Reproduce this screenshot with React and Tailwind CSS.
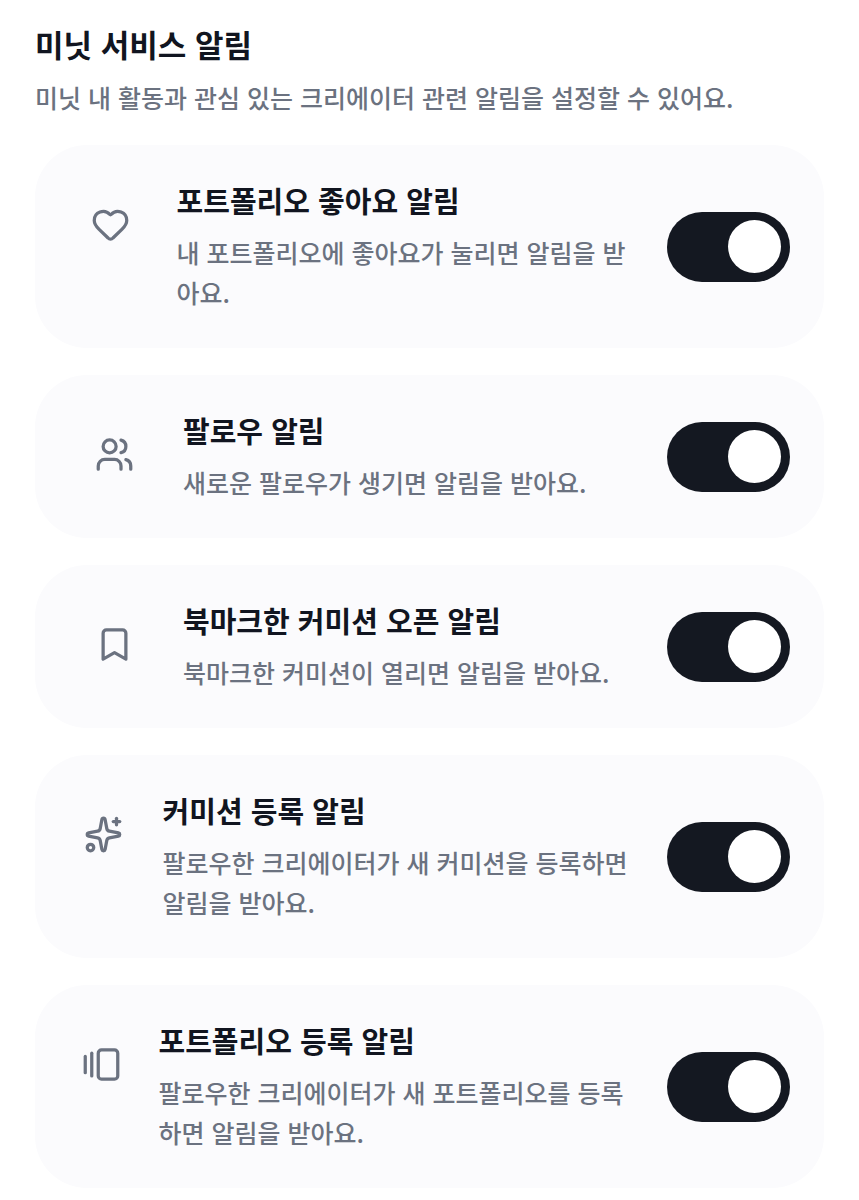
import { Heart, Users, Bookmark, Sparkles, GalleryHorizontalEnd } from "lucide-react";

const settings = [
  { id: "portfolio-like", icon: Heart, title: "포트폴리오 좋아요 알림", description: "내 포트폴리오에 좋아요가 눌리면 알림을 받아요." },
  { id: "follow", icon: Users, title: "팔로우 알림", description: "새로운 팔로우가 생기면 알림을 받아요." },
  { id: "commission-open", icon: Bookmark, title: "북마크한 커미션 오픈 알림", description: "북마크한 커미션이 열리면 알림을 받아요." },
  { id: "commission-new", icon: Sparkles, title: "커미션 등록 알림", description: "팔로우한 크리에이터가 새 커미션을 등록하면 알림을 받아요." },
  { id: "portfolio-new", icon: GalleryHorizontalEnd, title: "포트폴리오 등록 알림", description: "팔로우한 크리에이터가 새 포트폴리오를 등록하면 알림을 받아요." },
];

function Switch({ id }) {
  return (
    <input
      id={id}
      type="checkbox"
      role="switch"
      defaultChecked
      aria-describedby={`${id}-description`}
      className="flex h-[70px] w-[123px] shrink-0 cursor-pointer appearance-none items-center rounded-full bg-gray-300 px-[9px] before:block before:size-[53px] before:rounded-full before:bg-white checked:justify-end checked:bg-[#141821]"
    />
  );
}

function SettingCard({ id, icon: Icon, title, description }) {
  return (
    <li className="flex items-center gap-[25px] rounded-[52px] bg-[#fbfbfd] py-[35px] pr-[34px] pl-[35px]">
      <div className="flex h-[88px] w-[88px] min-w-0 items-center justify-center self-start text-[#6b7280]">
        <Icon className="size-[39px] shrink-0" strokeWidth={2} aria-hidden="true" />
      </div>
      <div className="flex min-w-0 grow flex-col gap-3 pb-px">
        <label htmlFor={id} className="text-[29px] leading-10 font-bold">
          {title}
        </label>
        <p id={`${id}-description`} className="text-[25px] leading-10 font-medium text-[#6b7280]">
          {description}
        </p>
      </div>
      <Switch id={id} />
    </li>
  );
}

export default function App() {
  return (
    <main
      lang="ko"
      className="bg-white px-[35px] pt-5 pb-[11px] font-['Noto_Sans_CJK_KR',sans-serif] text-[#111520]"
    >
      <header className="flex flex-col gap-[9px]">
        <h1 className="text-[31px] leading-[48px] font-bold">미닛 서비스 알림</h1>
        <p className="text-[25px] leading-10 font-medium text-[#6b7280]">
          미닛 내 활동과 관심 있는 크리에이터 관련 알림을 설정할 수 있어요.
        </p>
      </header>
      <ul className="mt-[28px] flex flex-col gap-[27px]">
        {settings.map((setting) => (
          <SettingCard key={setting.id} {...setting} />
        ))}
      </ul>
    </main>
  );
}
